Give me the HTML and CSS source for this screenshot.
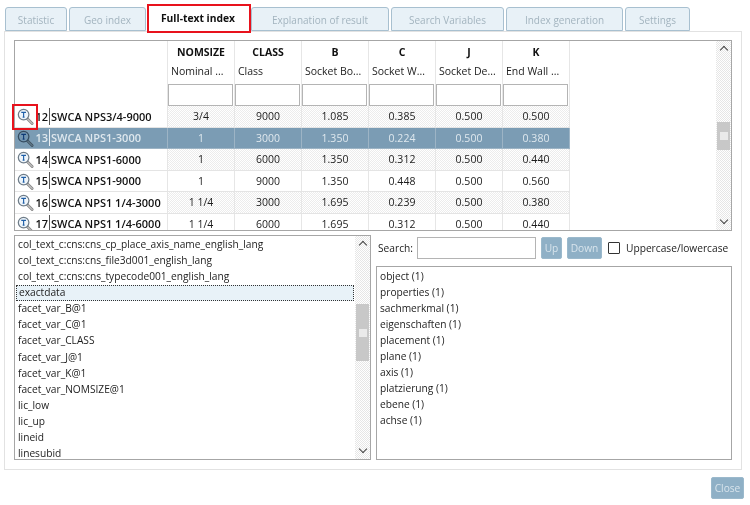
FILE: index.html
```html
<!DOCTYPE html>
<html lang="en">
<head>
<meta charset="utf-8">
<title>Full-text index</title>
<link rel="stylesheet" href="styles.css">
</head>
<body>
<svg class="defs" width="0" height="0" aria-hidden="true">
  <symbol id="lens" viewBox="0 0 18 18">
    <path d="M11 11.5l5 5" stroke="#8a8a8a" stroke-width="3" stroke-linecap="round" fill="none"/>
    <path d="M11.5 12l4.5 4.5" stroke="#e8e8e8" stroke-width="1" stroke-linecap="round" fill="none"/>
    <circle cx="7" cy="7" r="5.6" fill="#eef5fb" stroke="#6e7c88" stroke-width="1.3"/>
    <path d="M4.5 4.6h5M7 4.6v5M6 9.6h2" stroke="#1f5fa8" stroke-width="1.2" fill="none"/>
  </symbol>
</svg>
<div class="app">
  <nav class="tabs">
    <div class="tab t1">Statistic</div>
    <div class="tab t2">Geo index</div>
    <div class="tab active">Full-text index</div>
    <div class="tab t4">Explanation of result</div>
    <div class="tab t5">Search Variables</div>
    <div class="tab t6">Index generation</div>
    <div class="tab t7">Settings</div>
    <span class="mark mark-tab"></span>
  </nav>
  <main class="panel">
    <section class="results">
      <div class="table">
        <div class="row head">
          <div class="cell first"></div>
          <div class="cell hc"><b>NOMSIZE</b><span>Nominal ...</span><i class="filter"></i></div>
          <div class="cell hc"><b>CLASS</b><span>Class</span><i class="filter"></i></div>
          <div class="cell hc"><b>B</b><span>Socket Bo...</span><i class="filter"></i></div>
          <div class="cell hc"><b>C</b><span>Socket W...</span><i class="filter"></i></div>
          <div class="cell hc"><b>J</b><span>Socket De...</span><i class="filter"></i></div>
          <div class="cell hc"><b>K</b><span>End Wall ...</span><i class="filter"></i></div>
        </div>
        <div class="row dith">
          <div class="cell first"><svg class="lens"><use href="#lens"/></svg><span class="num">12</span><span class="name">SWCA NPS3/4-9000</span></div>
          <div class="cell">3/4</div><div class="cell">9000</div><div class="cell">1.085</div><div class="cell">0.385</div><div class="cell">0.500</div><div class="cell">0.500</div>
        </div>
        <div class="row sel">
          <div class="cell first"><svg class="lens"><use href="#lens"/></svg><span class="num">13</span><span class="name">SWCA NPS1-3000</span></div>
          <div class="cell">1</div><div class="cell">3000</div><div class="cell">1.350</div><div class="cell">0.224</div><div class="cell">0.500</div><div class="cell">0.380</div>
        </div>
        <div class="row dith">
          <div class="cell first"><svg class="lens"><use href="#lens"/></svg><span class="num">14</span><span class="name">SWCA NPS1-6000</span></div>
          <div class="cell">1</div><div class="cell">6000</div><div class="cell">1.350</div><div class="cell">0.312</div><div class="cell">0.500</div><div class="cell">0.440</div>
        </div>
        <div class="row">
          <div class="cell first"><svg class="lens"><use href="#lens"/></svg><span class="num">15</span><span class="name">SWCA NPS1-9000</span></div>
          <div class="cell">1</div><div class="cell">9000</div><div class="cell">1.350</div><div class="cell">0.448</div><div class="cell">0.500</div><div class="cell">0.560</div>
        </div>
        <div class="row dith">
          <div class="cell first"><svg class="lens"><use href="#lens"/></svg><span class="num">16</span><span class="name">SWCA NPS1 1/4-3000</span></div>
          <div class="cell">1 1/4</div><div class="cell">3000</div><div class="cell">1.695</div><div class="cell">0.239</div><div class="cell">0.500</div><div class="cell">0.380</div>
        </div>
        <div class="row">
          <div class="cell first"><svg class="lens"><use href="#lens"/></svg><span class="num">17</span><span class="name">SWCA NPS1 1/4-6000</span></div>
          <div class="cell">1 1/4</div><div class="cell">6000</div><div class="cell">1.695</div><div class="cell">0.312</div><div class="cell">0.500</div><div class="cell">0.440</div>
        </div>
      </div>
      <div class="scroll sb-table">
        <span class="arrow up"></span>
        <span class="thumb"><i></i></span>
        <span class="arrow down"></span>
      </div>
      <span class="mark mark-icon"></span>
    </section>
    <div class="lower">
      <section class="varlist">
        <ul class="list">
          <li>col_text_c:cns:cns_cp_place_axis_name_english_lang</li>
          <li>col_text_c:cns:cns_file3d001_english_lang</li>
          <li>col_text_c:cns:cns_typecode001_english_lang</li>
          <li class="focus">exactdata</li>
          <li>facet_var_B@1</li>
          <li>facet_var_C@1</li>
          <li>facet_var_CLASS</li>
          <li>facet_var_J@1</li>
          <li>facet_var_K@1</li>
          <li>facet_var_NOMSIZE@1</li>
          <li>lic_low</li>
          <li>lic_up</li>
          <li>lineid</li>
          <li>linesubid</li>
        </ul>
        <div class="scroll sb-list">
          <span class="arrow up"></span>
          <span class="thumb"><i></i></span>
          <span class="arrow down"></span>
        </div>
      </section>
      <section class="search">
        <div class="searchbar">
          <label class="lbl">Search:</label>
          <span class="field"></span>
          <span class="btn up-btn">Up</span>
          <span class="btn down-btn">Down</span>
          <span class="check"></span>
          <span class="lbl caselbl">Uppercase/lowercase</span>
        </div>
        <ul class="terms">
          <li>object (1)</li>
          <li>properties (1)</li>
          <li>sachmerkmal (1)</li>
          <li>eigenschaften (1)</li>
          <li>placement (1)</li>
          <li>plane (1)</li>
          <li>axis (1)</li>
          <li>platzierung (1)</li>
          <li>ebene (1)</li>
          <li>achse (1)</li>
        </ul>
      </section>
    </div>
  </main>
  <footer class="foot"><span class="btn close-btn">Close</span></footer>
</div>
</body>
</html>
```
FILE: styles.css
```css
* { box-sizing: border-box; }
html, body { margin: 0; padding: 0; background: #fff; }
body { width: 750px; height: 505px; overflow: hidden; font-family: "Open Sans", "Noto Sans", sans-serif; font-size: 10.2px; color: #1c1c1c; }
.defs { position: absolute; }
ul { list-style: none; margin: 0; padding: 0; }
.app { width: 750px; height: 505px; padding: 7px 0 0 4px; }

.tabs { position: relative; display: flex; height: 24px; margin-left: 1px; }
.tab { height: 24px; margin-right: 2px; padding-top: 1px; border: 1px solid #a8c0d0; border-radius: 3px 3px 0 0; background: #e8f1f7; color: #a3b4bf; font-size: 10px; display: flex; align-items: center; justify-content: center; }
.t1 { width: 62px; }
.t2 { width: 77px; margin-right: 3px; }
.active { width: 98px; margin-right: 4px; padding: 0 0 2px; background: #fff; border-color: #fff; color: #111; font-weight: 700; font-size: 10.3px; }
.t4 { width: 138px; }
.t5 { width: 113px; }
.t6 { width: 117px; }
.t7 { width: 65px; }
.mark { position: absolute; border: 2px solid #e8121c; pointer-events: none; }
.mark-tab { left: 142px; top: -3px; width: 104px; height: 29px; }

.panel { width: 738px; height: 439px; border: 1px solid #e2e2e2; padding: 8px 9px 0; background: #fff; }
.results { position: relative; display: flex; height: 191px; border: 1px solid #a6a6a6; }
.table { width: 701px; height: 189px; overflow: hidden; }
.row { display: flex; height: 21.5px; width: 555px; border-bottom: 1px solid #e4e4e4; }
.cell { width: 67px; display: flex; align-items: center; justify-content: center; border-right: 1px solid #e6e6e6; white-space: nowrap; font-size: 10.5px; }
.cell.first { width: 153px; justify-content: flex-start; background: #fff; font-size: 11px; font-weight: 600; color: #111; }
.dith .cell:not(.first) { background: repeating-conic-gradient(#ececec 0 25%, #fff 0 50%) 0 0 / 2px 2px; }
.head { height: 65px; border-bottom: 0; }
.hc { flex-direction: column; justify-content: flex-start; padding: 2px 0 0; }
.hc b { height: 18px; line-height: 18px; font-weight: 700; color: #111; }
.hc span { align-self: flex-start; height: 22px; line-height: 20px; padding-left: 3px; }
.filter { display: block; flex: none; width: 65px; height: 22px; margin-top: 1px; border: 1px solid #b4b4b4; background: #fff; align-self: flex-start; }
.lens { width: 17px; height: 17px; margin: 1px 2px 0 2px; flex: none; }
.sel .lens { mix-blend-mode: multiply; }
.num { width: 12px; text-align: right; font-size: 11px; white-space: nowrap; direction: rtl; }
.name { margin-left: 1px; padding-left: 1px; border-left: 1px solid #555; line-height: 17px; }
.sel, .sel .cell, .sel .cell.first { background: #7b9cb4; color: #dfe8ee; border-color: #9db4c5; }
.sel .name { border-left-color: #e8eef2; }

.scroll { flex: none; width: 15px; display: flex; flex-direction: column; align-items: center; background: repeating-conic-gradient(#e6e6e6 0 25%, #fff 0 50%) 0 0 / 2px 2px; }
.sb-table { margin-left: auto; }
.arrow { flex: none; height: 16px; width: 15px; position: relative; }
.arrow::after { content: ""; position: absolute; left: 5px; width: 5px; height: 5px; border-left: 1.3px solid #444; border-top: 1.3px solid #444; transform: rotate(45deg); top: 6px; }
.arrow.down::after { transform: rotate(225deg); top: 3px; }
.arrow.down { margin-top: auto; }
.thumb { width: 13px; background: #c8c8c8; display: flex; align-items: center; justify-content: center; }
.thumb i { width: 8px; height: 8px; background: #eaeaea; }
.sb-table .thumb { height: 28px; margin-top: 65px; }
.sb-list .thumb { height: 57px; margin-top: 52px; }
.mark-icon { left: -3px; top: 63px; width: 26px; height: 26px; }

.lower { display: flex; gap: 5px; margin-top: 4px; }
.varlist { display: flex; width: 357px; height: 225px; border: 1px solid #a6a6a6; }
.list { flex: 1; height: 223px; overflow: hidden; padding: 1px 1px 0; }
.list li { height: 16.08px; line-height: 15px; padding-left: 2px; white-space: nowrap; }
.focus { background: #e8f2f8; outline: 1px dotted #333; outline-offset: -1px; padding-left: 3px !important; }

.search { width: 356px; margin-top: 2px; }
.searchbar { display: flex; align-items: center; height: 22px; gap: 5px; padding-left: 2px; }
.lbl { white-space: nowrap; }
.caselbl { margin-left: 1px; }
.field { width: 119px; height: 22px; margin-left: auto; border: 1px solid #b4b4b4; background: #fff; }
.searchbar .lbl:first-child { width: 33px; }
.field { margin-left: 1px; }
.btn { display: flex; align-items: center; justify-content: center; height: 22px; border-radius: 2px; background: #8fb0c6; color: #d8e4ec; border: 1px solid #9bb9cc; }
.up-btn { width: 21px; }
.down-btn { width: 35px; }
.check { width: 12px; height: 12px; margin-left: 1px; border: 1px solid #333; border-radius: 1px; background: #fff; }
.terms { height: 194px; margin-top: 7px; border: 1px solid #a6a6a6; padding: 1px 3px; }
.terms li { height: 16px; line-height: 16px; }

.foot { display: flex; justify-content: flex-end; width: 740px; padding-top: 7px; }
.close-btn { width: 33px; }
```
